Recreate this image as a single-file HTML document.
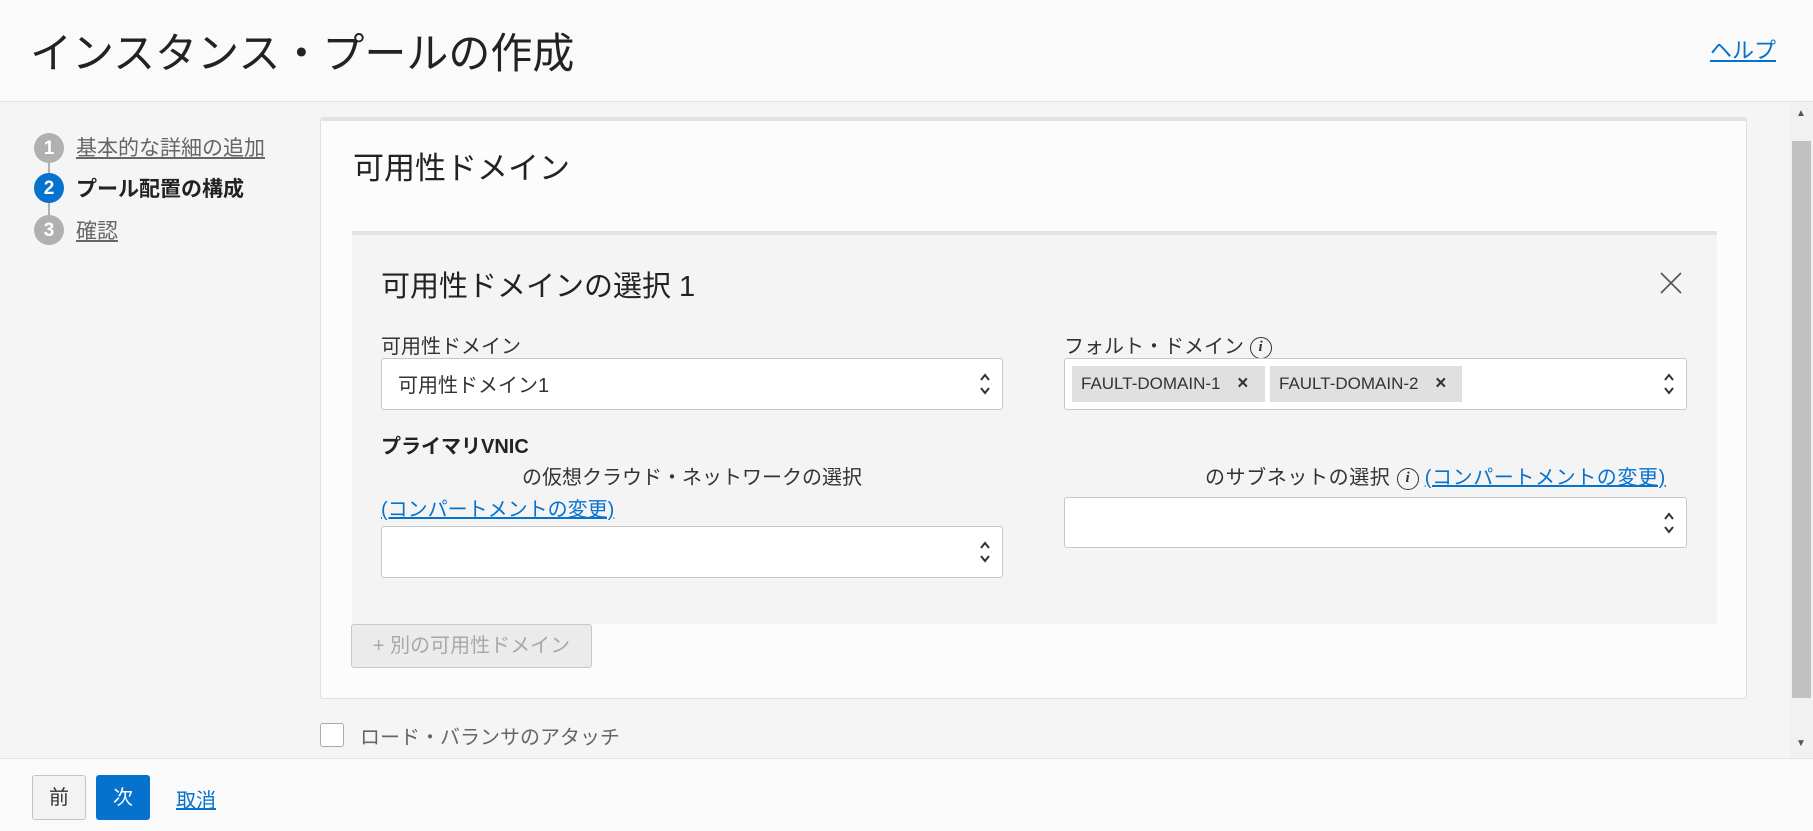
<!DOCTYPE html>
<html><head><meta charset="utf-8"><style>
*{box-sizing:border-box;margin:0;padding:0}
body{width:1813px;height:831px;overflow:hidden;background:#f5f5f5;font-family:"Liberation Sans","Noto Sans CJK JP",sans-serif;color:#333;position:relative}
.a{position:absolute;white-space:nowrap}
a{color:#0572ce;text-decoration:underline}
.sel{position:absolute;background:#fff;border:1px solid #c7c7c7;border-radius:3px}
.arr{position:absolute;right:10px;top:50%;transform:translateY(-50%);width:14px;height:28px}
.chip{position:absolute;top:7px;height:36px;background:#e0e0e0;font-size:17px;line-height:36px;padding-left:9px;color:#333}
.circ{position:absolute;left:34px;width:30px;height:30px;border-radius:50%;background:#b0b0b0;color:#fff;font-size:19px;font-weight:bold;text-align:center;line-height:31px}
.info{display:inline-block;width:22px;height:22px;border:1.5px solid #333;border-radius:50%;font-size:15px;font-style:italic;font-family:"Liberation Serif",serif;text-align:center;line-height:19px;vertical-align:middle;font-weight:bold}
</style></head><body>
<div class="a" style="left:0;top:0;width:1813px;height:102px;background:#fafafa;border-bottom:1px solid #e3e3e3"></div>
<div class="a" style="left:30px;top:20px;font-size:42px;color:#222">インスタンス・プールの作成</div>
<a class="a" style="left:1710px;top:33px;font-size:22px">ヘルプ</a>

<div class="a" style="left:1790px;top:102px;width:23px;height:656px;background:#f1f1f1"></div>
<div class="a" style="left:1792px;top:141px;width:19px;height:557px;background:#c1c1c1"></div>
<div class="a" style="left:1796px;top:108px;font-size:10px;color:#555">▲</div>
<div class="a" style="left:1796px;top:738px;font-size:10px;color:#555">▼</div>

<div class="a" style="left:48px;top:160px;width:2px;height:60px;background:#b0b0b0"></div>
<div class="circ" style="top:133px">1</div>
<div class="circ" style="top:173px;background:#0572ce">2</div>
<div class="circ" style="top:215px">3</div>
<a class="a" style="left:76px;top:132px;font-size:21px;color:#666">基本的な詳細の追加</a>
<div class="a" style="left:76px;top:173px;font-size:21px;font-weight:bold;color:#222">プール配置の構成</div>
<a class="a" style="left:76px;top:215px;font-size:21px;color:#666">確認</a>

<div class="a" style="left:320px;top:117px;width:1427px;height:582px;background:#fcfcfc;border:1px solid #e0e0e0;border-top:4px solid #e2e2e5;border-radius:3px"></div>
<div class="a" style="left:353px;top:143px;font-size:31px;color:#222">可用性ドメイン</div>

<div class="a" style="left:352px;top:231px;width:1365px;height:393px;background:#f4f4f4;border-top:4px solid #e2e2e5"></div>
<div class="a" style="left:381px;top:263px;font-size:29px;color:#222">可用性ドメインの選択 1</div>
<svg class="a" style="left:1660px;top:272px" width="22" height="22"><path d="M1 1L21 21M21 1L1 21" stroke="#555" stroke-width="1.6"/></svg>

<div class="a" style="left:381px;top:330px;font-size:20px;color:#333">可用性ドメイン</div>
<div class="sel" style="left:381px;top:358px;width:622px;height:52px"><div class="a" style="left:16px;top:10px;font-size:20px">可用性ドメイン1</div><svg class="arr" viewBox="0 0 14 28"><path d="M3 10L7 5L11 10M3 18L7 23L11 18" fill="none" stroke="#333" stroke-width="2"/></svg></div>

<div class="a" style="left:1064px;top:330px;font-size:20px;color:#333">フォルト・ドメイン <span class="info">i</span></div>
<div class="sel" style="left:1064px;top:358px;width:623px;height:52px">
<div class="chip" style="left:7px;width:193px">FAULT-DOMAIN-1 <b style="margin-left:12px;font-size:19px">×</b></div>
<div class="chip" style="left:205px;width:192px">FAULT-DOMAIN-2 <b style="margin-left:12px;font-size:19px">×</b></div>
<svg class="arr" viewBox="0 0 14 28"><path d="M3 10L7 5L11 10M3 18L7 23L11 18" fill="none" stroke="#333" stroke-width="2"/></svg></div>

<div class="a" style="left:381px;top:430px;font-size:20px;font-weight:bold;color:#222">プライマリVNIC</div>
<div class="a" style="left:522px;top:461px;font-size:20px">の仮想クラウド・ネットワークの選択</div>
<a class="a" style="left:381px;top:493px;font-size:20px">(コンパートメントの変更)</a>
<div class="sel" style="left:381px;top:526px;width:622px;height:52px"><svg class="arr" viewBox="0 0 14 28"><path d="M3 10L7 5L11 10M3 18L7 23L11 18" fill="none" stroke="#333" stroke-width="2"/></svg></div>

<div class="a" style="left:1205px;top:461px;font-size:20px;letter-spacing:0.6px">のサブネットの選択 <span class="info" style="letter-spacing:0">i</span> <a>(コンパートメントの変更)</a></div>
<div class="sel" style="left:1064px;top:497px;width:623px;height:51px"><svg class="arr" viewBox="0 0 14 28"><path d="M3 10L7 5L11 10M3 18L7 23L11 18" fill="none" stroke="#333" stroke-width="2"/></svg></div>

<div class="a" style="left:351px;top:624px;width:241px;height:44px;background:#ebebeb;border:1px solid #c8c8c8;border-radius:3px;color:#a8a8a8;font-size:20px;text-align:center;line-height:42px">+ 別の可用性ドメイン</div>

<div class="a" style="left:320px;top:723px;width:24px;height:24px;background:#fff;border:1px solid #aaa;border-radius:3px"></div>
<div class="a" style="left:360px;top:721px;font-size:20px;color:#666">ロード・バランサのアタッチ</div>

<div class="a" style="left:0;top:758px;width:1813px;height:73px;background:#fafafa;border-top:1px solid #e3e3e3"></div>
<div class="a" style="left:32px;top:775px;width:54px;height:45px;background:#f3f3f3;border:1px solid #c4c4c4;border-radius:3px;font-size:20px;text-align:center;line-height:45px;color:#333">前</div>
<div class="a" style="left:96px;top:775px;width:54px;height:45px;background:#0572ce;border-radius:3px;font-size:20px;text-align:center;line-height:47px;color:#fff">次</div>
<a class="a" style="left:176px;top:784px;font-size:20px">取消</a>
</body></html>
